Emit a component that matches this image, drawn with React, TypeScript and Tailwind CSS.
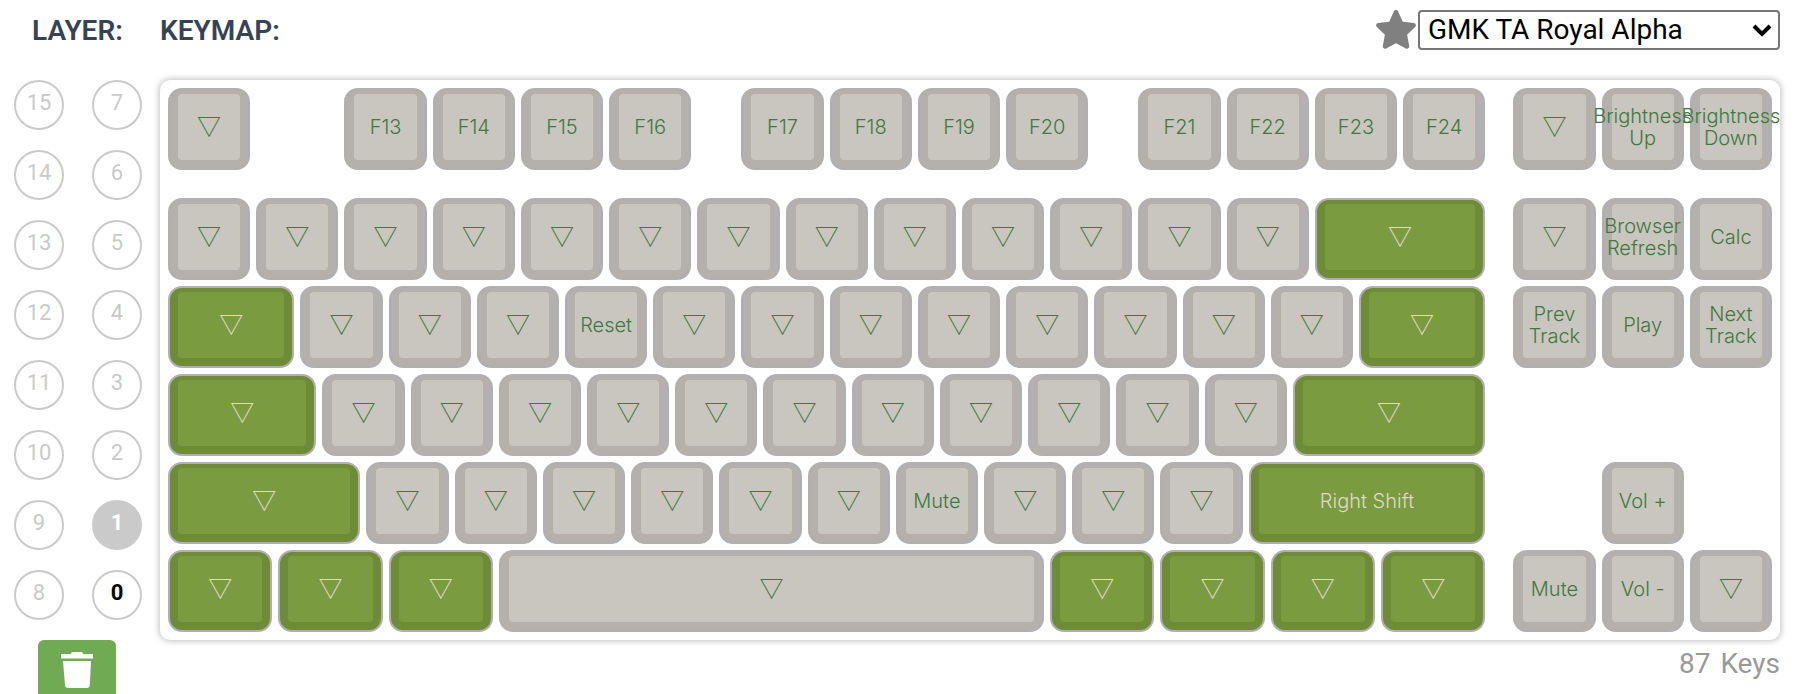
import React from 'react';

const T = '▽';

type Cell = { lines?: string[]; units: number; accent?: boolean; blank?: boolean };

const key = (label: string, units = 1): Cell => ({ lines: label.split('\n'), units });
const mod = (label: string, units: number): Cell => ({ lines: label.split('\n'), units, accent: true });
const gap = (units: number): Cell => ({ units, blank: true });
const blanks = (count: number): Cell[] => Array.from({ length: count }, () => key(T));

const rows: Cell[][] = [
  [
    key(T), gap(1), key('F13'), key('F14'), key('F15'), key('F16'), gap(0.5),
    key('F17'), key('F18'), key('F19'), key('F20'), gap(0.5),
    key('F21'), key('F22'), key('F23'), key('F24'), gap(0.25),
    key(T), key('Brightness\nUp'), key('Brightness\nDown'),
  ],
  [...blanks(13), mod(T, 2), gap(0.25), key(T), key('Browser\nRefresh'), key('Calc')],
  [
    mod(T, 1.5), ...blanks(3), key('Reset'), ...blanks(8), mod(T, 1.5), gap(0.25),
    key('Prev\nTrack'), key('Play'), key('Next\nTrack'),
  ],
  [mod(T, 1.75), ...blanks(11), mod(T, 2.25), gap(3.25)],
  [mod(T, 2.25), ...blanks(6), key('Mute'), ...blanks(3), mod('Right Shift', 2.75), gap(1.25), key('Vol +'), gap(1)],
  [
    mod(T, 1.25), mod(T, 1.25), mod(T, 1.25), key(T, 6.25),
    mod(T, 1.25), mod(T, 1.25), mod(T, 1.25), mod(T, 1.25), gap(0.25),
    key('Mute'), key('Vol -'), key(T),
  ],
];

const layerRows = [[15, 7], [14, 6], [13, 5], [12, 4], [11, 3], [10, 2], [9, 1], [8, 0]];

function layerStyle(layer: number) {
  if (layer === 1) return 'bg-[#cacaca] font-bold text-white';
  if (layer === 0) return 'bg-white font-bold text-black';
  return 'bg-white text-[#cacaca]';
}

function Key({ cell }: { cell: Cell }) {
  const style = { gridColumn: `span ${cell.units * 4}` };
  if (cell.blank) return <div style={style} />;
  const lines = cell.lines ?? [];
  const isTransparent = lines[0] === T;
  return (
    <div style={style} className="h-[82px] pr-[6px]">
      <button
        type="button"
        className={`flex h-full w-full rounded-[14px] border-2 border-[#b0b0b0] px-[8px] pt-[4px] pb-[8px] ${
          cell.accent ? 'bg-[#6e8b38] text-[#dfdacb]' : 'bg-[#b4b1ac] text-[#3f7840]'
        }`}
      >
        <span
          className={`flex min-w-0 flex-1 flex-col items-center justify-center self-stretch rounded-[4px] ${
            cell.accent ? 'bg-[#7a9b3f]' : 'bg-[#c9c6bf]'
          } ${
            isTransparent
              ? "pb-[4px] font-['Noto_Sans_CJK_JP',sans-serif] text-[24px] leading-[24px] font-medium"
              : "font-[Inter,sans-serif] text-[20px] leading-[22px] font-light"
          }`}
        >
          {lines.map((line) => (
            <span key={line} className="whitespace-nowrap">{line}</span>
          ))}
        </span>
      </button>
    </div>
  );
}

export default function App() {
  return (
    <main className="flex bg-white pr-[24px] font-[Roboto,sans-serif]">
      <aside className="flex w-[160px] shrink-0 flex-col">
        <h2 className="flex h-[80px] items-start pt-[15px] pl-[32px] text-[28px] leading-[32px] font-semibold text-[#374355]">
          LAYER:
        </h2>
        <div className="flex flex-col gap-[20px] pl-[14px]">
          {layerRows.map((pair) => (
            <div key={pair[0]} className="flex gap-[28px]">
              {pair.map((layer) => (
                <button
                  key={layer}
                  type="button"
                  className={`h-[50px] w-[50px] rounded-full border-2 border-[#cacaca] pb-[4px] text-[22px] leading-[26px] ${layerStyle(layer)}`}
                >
                  {layer}
                </button>
              ))}
            </div>
          ))}
        </div>
        <button
          type="button"
          aria-label="Clear layer"
          className="mt-[20px] ml-[38px] flex h-[54px] w-[78px] items-start justify-center rounded-t-[6px] bg-[#70ab54] pt-[12px] text-white"
        >
          <svg width="32" height="36" viewBox="0 0 32 36" fill="currentColor" aria-hidden="true">
            <path d="M0 2h10c0-1.2.8-2 2-2h8c1.2 0 2 .8 2 2h10v4.500H0z" />
            <path d="M2 9h28l-1.200 24c-.1 2-1.200 3-3 3H7c-2 0-2.900-1-3-3z" />
          </svg>
        </button>
      </aside>
      <section className="min-w-0 flex-1">
        <header className="flex h-[80px] items-start justify-between">
          <h2 className="pt-[15px] text-[28px] leading-[32px] font-semibold text-[#374355]">KEYMAP:</h2>
          <div className="flex items-center gap-[2px] pt-[10px]">
            <svg width="40" height="40" viewBox="0 0 40 40" fill="#808080" aria-hidden="true">
              <path d="M17.900 1.300c.8-1.700 3.300-1.700 4.100 0l4.800 10.400 11 1.400c2 .3 2.800 2.500 1.400 3.900l-8.100 7.800 2.100 11.300c.3 1.900-1.600 3.200-3.300 2.400L20 33.200l-9.900 5.300c-1.700.8-3.600-.5-3.300-2.400l2.100-11.300L.8 17c-1.400-1.400-.6-3.600 1.400-3.900l11-1.400z" />
            </svg>
            <div className="relative">
              <select
                aria-label="Keycap colorway"
                className="h-[40px] w-[362px] appearance-none rounded-[4px] border-2 border-[#767676] bg-white pl-[8px] text-[28px] leading-[34px] text-black"
                defaultValue="GMK TA Royal Alpha"
              >
                <option>GMK TA Royal Alpha</option>
              </select>
              <svg
                className="pointer-events-none absolute top-[14px] right-[8px]"
                width="20"
                height="14"
                viewBox="0 0 20 14"
                fill="none"
                stroke="black"
                strokeWidth="4"
                aria-hidden="true"
              >
                <path d="M2 2l8 8 8-8" />
              </svg>
            </div>
          </div>
        </header>
        <div className="flex flex-col gap-[6px] rounded-[10px] bg-white py-[8px] pr-[2px] pl-[8px] shadow-[0_0_6px_1px_rgba(0,0,0,0.25)]">
          {rows.map((row, r) => (
            <div key={r} className={`grid grid-cols-[repeat(73,minmax(0,1fr))] ${r === 0 ? 'mb-[22px]' : ''}`}>
              {row.map((cell, i) => (
                <Key key={i} cell={cell} />
              ))}
            </div>
          ))}
        </div>
        <p className="flex justify-end gap-[10px] pt-[8px] text-[28px] leading-[32px] text-[#999999]">
          <span>87</span>
          <span>Keys</span>
        </p>
      </section>
    </main>
  );
}
